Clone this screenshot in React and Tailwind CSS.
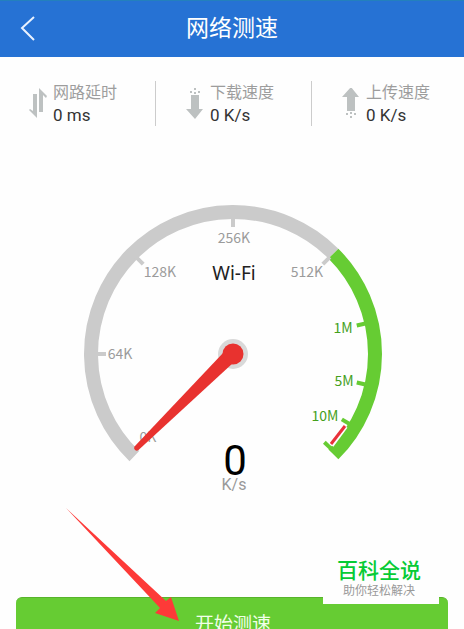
const stats = [
  { label: '网路延时', value: '0 ms', icon: 'delay' },
  { label: '下载速度', value: '0 K/s', icon: 'down' },
  { label: '上传速度', value: '0 K/s', icon: 'up' },
];

// angle in degrees, clockwise from the right
const ticks = [
  { angle: 180, color: '#cbcbcb' },
  { angle: 225, color: '#cbcbcb' },
  { angle: 270, color: '#cbcbcb' },
  { angle: 315, color: '#cbcbcb' },
  { angle: -13, color: '#66cc33' },
  { angle: 13, color: '#66cc33' },
  { angle: 31, color: '#66cc33' },
  { angle: 44, color: '#66cc33' },
];

const labels = [
  { text: '0K', x: 66, y: 238, color: '#9b9b9b' },
  { text: '64K', x: 38, y: 155, color: '#9b9b9b' },
  { text: '128K', x: 78, y: 73, color: '#9b9b9b' },
  { text: '256K', x: 152, y: 39, color: '#9b9b9b' },
  { text: '512K', x: 225, y: 73, color: '#9b9b9b' },
  { text: '1M', x: 261, y: 129, color: '#45a01c' },
  { text: '5M', x: 262, y: 182, color: '#45a01c' },
  { text: '10M', x: 243, y: 217, color: '#45a01c' },
];

const CX = 151;
const CY = 150;

function point(r, angle) {
  const a = (angle * Math.PI) / 180;
  return [CX + r * Math.cos(a), CY + r * Math.sin(a)];
}

function arc(r, from, to) {
  const [x1, y1] = point(r, from);
  const [x2, y2] = point(r, to);
  const large = to - from > 180 ? 1 : 0;
  return `M${x1} ${y1}A${r} ${r} 0 ${large} 1 ${x2} ${y2}`;
}

function StatIcon({ name }) {
  if (name === 'delay') {
    return (
      <svg className="h-8 w-5 shrink-0" viewBox="0 0 20 32" fill="#bdc1c1" aria-hidden="true">
        <path d="M4 6H8V30L0 22L1 21L4 23Z" />
        <path d="M10 0L18 8L17 10L14 7V24H10Z" />
      </svg>
    );
  }
  return (
    <svg className="h-8 w-5 shrink-0" viewBox="0 0 20 32" fill="#bdc1c1" aria-hidden="true">
      <g transform={name === 'up' ? 'matrix(1 0 0 -1 0 31)' : 'translate(0 -1)'}>
        <path d="M5 8H13V22H17L9 32L0 22H5Z" />
        <rect x="4" y="4" width="2" height="2" />
        <rect x="8" y="1" width="2" height="2" />
        <rect x="8" y="5" width="2" height="2" />
        <rect x="12" y="4" width="2" height="2" />
      </g>
    </svg>
  );
}

function Gauge() {
  return (
    <svg className="h-[292px] w-[300px]" viewBox="0 0 300 292" role="img" aria-label="Wi-Fi 0 K/s">
      <path d={arc(142, 134, 315)} fill="none" stroke="#cbcbcb" strokeWidth="14" />
      <path d={arc(142, -45, 45)} fill="none" stroke="#66cc33" strokeWidth="14" />
      <path d="M249 241L263 222" fill="none" stroke="#fff" strokeWidth="6" />
      {ticks.map(({ angle, color }) => {
        const [x1, y1] = point(127, angle);
        const [x2, y2] = point(137, angle);
        return <line key={angle} x1={x1} y1={y1} x2={x2} y2={y2} stroke={color} strokeWidth="4" />;
      })}
      <path d="M249 240L263 222" fill="none" stroke="#e8323a" strokeWidth="3" />

      <g className="font-['Noto_Sans_CJK_SC',sans-serif] text-[14px]" textAnchor="middle">
        {labels.map(({ text, x, y, color }) => (
          <text key={text} x={x} y={y} fill={color}>
            {text}
          </text>
        ))}
      </g>
      <text x="152" y="76" textAnchor="middle" fill="#222" className="font-['Noto_Sans',sans-serif] text-[19px]">
        Wi-Fi
      </text>

      <circle cx={CX} cy={CY} r="15" fill="#d9d9d9" />
      <path d="M52.500 242.500L141 149L151 159L56.500 246A2.700 2.700 0 0 1 52.500 242.500Z" fill="#e8322f" />
      <circle cx={CX} cy={CY} r="10.500" fill="#e8322f" />

      <text x="153" y="271" textAnchor="middle" fill="#000" className="font-[Roboto,sans-serif] text-[42px]">
        0
      </text>
      <text x="152" y="286" textAnchor="middle" fill="#999" className="font-[Roboto,sans-serif] text-[16px]">
        K/s
      </text>
    </svg>
  );
}

export default function App() {
  return (
    <div className="relative flex h-screen flex-col overflow-hidden bg-[#fefefe] font-[Roboto,'Noto_Sans_CJK_SC',sans-serif]">
      <header className="grid h-[57px] shrink-0 grid-cols-[1fr_auto_1fr] items-center border-t border-[#2380bd] bg-[#2672d4] text-white">
        <button type="button" aria-label="返回" className="ml-5 w-4">
          <svg className="h-[26px] w-4" viewBox="0 0 16 26" fill="none" stroke="#e9f2ff" strokeWidth="2" aria-hidden="true">
            <path d="M14 1L2 12L14 24" />
          </svg>
        </button>
        <h1 className="text-[23px] leading-8">网络测速</h1>
      </header>

      <main className="flex flex-col">
        <ul className="mt-6 grid grid-cols-[1fr_1fr_152px]">
          {stats.map((s) => (
            <li key={s.label} className="flex h-[45px] items-center gap-1 border-r border-[#ccc] pl-[29px] last:border-r-0 [&+li]:pl-[30px]">
              <StatIcon name={s.icon} />
              <div>
                <p className="text-[16px] leading-[22px] text-[#9d9d9d]">{s.label}</p>
                <p className="text-[17px] leading-[22px] text-[#333]">{s.value}</p>
              </div>
            </li>
          ))}
        </ul>

        <section className="mt-[78px] flex justify-center">
          <Gauge />
        </section>

        <button
          type="button"
          className="mx-4 mt-[101px] h-[56px] rounded-md border-t border-[#58b42b] bg-[#66cc33] pl-0.5 text-[19px] text-[#f1ffe9]"
        >
          开始测速
        </button>
      </main>

      <svg className="absolute top-[508px] left-[66px] h-[114px] w-[114px]" viewBox="0 0 114 114" fill="#fd3a38" aria-hidden="true">
        <path d="M0 0L100 93L105 89L113 113L89 105L94 100Z" />
      </svg>

      <aside className="absolute top-[556px] right-[25px] flex h-12 w-[116px] flex-col items-center bg-[#fefefe] pr-1">
        <strong className="text-[21px] leading-[30px] font-medium text-[#07cb35]">百科全说</strong>
        <span className="text-[12px] leading-[10px] text-[#999]">助你轻松解决</span>
      </aside>
    </div>
  );
}
